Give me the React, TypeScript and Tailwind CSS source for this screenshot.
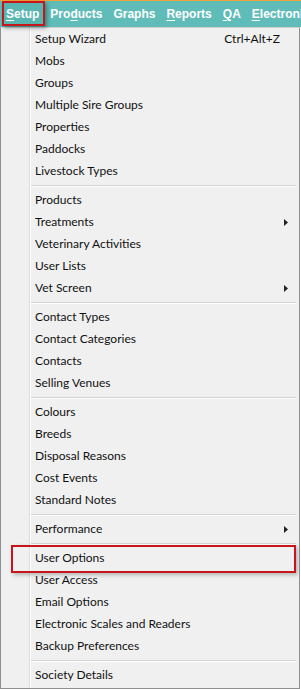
import React from "react";

type Item = { label: string; shortcut?: string; sub?: boolean; highlight?: boolean };

const groups: Item[][] = [
  [
    { label: "Setup Wizard", shortcut: "Ctrl+Alt+Z" },
    { label: "Mobs" },
    { label: "Groups" },
    { label: "Multiple Sire Groups" },
    { label: "Properties" },
    { label: "Paddocks" },
    { label: "Livestock Types" },
  ],
  [
    { label: "Products" },
    { label: "Treatments", sub: true },
    { label: "Veterinary Activities" },
    { label: "User Lists" },
    { label: "Vet Screen", sub: true },
  ],
  [
    { label: "Contact Types" },
    { label: "Contact Categories" },
    { label: "Contacts" },
    { label: "Selling Venues" },
  ],
  [
    { label: "Colours" },
    { label: "Breeds" },
    { label: "Disposal Reasons" },
    { label: "Cost Events" },
    { label: "Standard Notes" },
  ],
  [{ label: "Performance", sub: true }],
  [
    { label: "User Options", highlight: true },
    { label: "User Access" },
    { label: "Email Options" },
    { label: "Electronic Scales and Readers" },
    { label: "Backup Preferences" },
  ],
  [{ label: "Society Details" }],
];

function Arrow() {
  return (
    <svg width="4" height="7" viewBox="0 0 4 7" className="shrink-0">
      <polygon points="0,0 4,3.5 0,7" fill="#222" />
    </svg>
  );
}

function Row({ item }: { item: Item }) {
  return (
    <div className="relative h-[22px] flex items-center pl-[4px] pr-[11px]">
      <span className="text-[12px] text-[#101010] leading-none">{item.label}</span>
      <div className="ml-auto flex items-center">
        {item.shortcut && (
          <span className="mr-[8px] text-[12px] text-[#101010] leading-none">{item.shortcut}</span>
        )}
        {item.sub && <Arrow />}
      </div>
      {item.highlight && (
        <div className="absolute left-[-20px] right-[3px] top-[-2px] bottom-[-4px] border-2 border-[#c8151b] shadow-[2px_2px_4px_rgba(0,0,0,0.25)] pointer-events-none" />
      )}
    </div>
  );
}

function Sep() {
  return (
    <div className="h-[7px] flex flex-col justify-center pr-[3px]">
      <div className="h-px bg-[#d5d5d5]" />
      <div className="h-px bg-white" />
    </div>
  );
}

type Menu = { pre: string; u: string; post: string };

function MenuLabel({ m }: { m: Menu }) {
  return (
    <span
      className="text-white font-bold text-[12px] leading-none"
      style={{ fontFamily: "'Liberation Sans', Arial, sans-serif" }}
    >
      {m.pre}
      {m.u && <span className="underline underline-offset-2">{m.u}</span>}
      {m.post}
    </span>
  );
}

export default function App() {
  const menus: Menu[] = [
    { pre: "Pro", u: "d", post: "ucts" },
    { pre: "Graphs", u: "", post: "" },
    { pre: "", u: "R", post: "eports" },
    { pre: "", u: "Q", post: "A" },
    { pre: "", u: "E", post: "lectronic" },
  ];
  return (
    <div
      className="w-[301px] h-[689px] bg-white overflow-hidden flex flex-col"
      style={{ fontFamily: "Lato, 'Noto Sans', sans-serif" }}
    >
      {/* menu bar */}
      <div className="h-[27px] shrink-0 bg-[#5fbcb8] border-t border-[#f0a23a] flex items-start pl-[2px] whitespace-nowrap">
        <div className="h-[25px] flex items-center pl-[2px] pr-[4px] border-2 border-[#c8151b] bg-[#5ab5b1] shadow-[2px_2px_4px_rgba(0,0,0,0.35)] relative z-10">
          <MenuLabel m={{ pre: "", u: "S", post: "etup" }} />
        </div>
        <div className="h-[25px] flex items-center gap-[11px] ml-[5px]">
          {menus.map((m, i) => (
            <MenuLabel key={i} m={m} />
          ))}
        </div>
      </div>
      {/* dropdown */}
      <div className="w-[300px] h-[662px] bg-[#f0f0f0] border border-[#8f8f8f] border-t-[#d0d0d0] overflow-hidden flex">
        <div className="w-[29px] shrink-0 border-r border-[#dcdcdc]" />
        <div className="flex-1 border-l border-white flex flex-col">
          {groups.map((g, gi) => (
            <React.Fragment key={gi}>
              {gi > 0 && <Sep />}
              {g.map((it) => (
                <Row key={it.label} item={it} />
              ))}
            </React.Fragment>
          ))}
        </div>
      </div>
    </div>
  );
}
